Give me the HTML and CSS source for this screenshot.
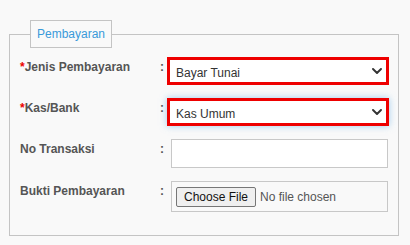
FILE: index.html
```html
<!DOCTYPE html>
<html lang="id">
<head>
<meta charset="utf-8">
<title>Pembayaran</title>
<link rel="stylesheet" href="styles.css">
</head>
<body>
<div class="page">
  <fieldset class="panel">
    <legend class="panel-title">Pembayaran</legend>
    <div class="form-grid">
      <div class="label"><span class="req">*</span>Jenis Pembayaran</div>
      <div class="colon">:</div>
      <div class="select invalid">
        <span class="select-text">Bayar Tunai</span>
        <svg class="chev" width="10" height="6" viewBox="0 0 10 6"><path d="M1 1 L5 5 L9 1" fill="none" stroke="#333" stroke-width="1.9" stroke-linecap="round" stroke-linejoin="round"/></svg>
      </div>

      <div class="label"><span class="req">*</span>Kas/Bank</div>
      <div class="colon">:</div>
      <div class="select invalid focused">
        <span class="select-text">Kas Umum</span>
        <svg class="chev" width="10" height="6" viewBox="0 0 10 6"><path d="M1 1 L5 5 L9 1" fill="none" stroke="#333" stroke-width="1.9" stroke-linecap="round" stroke-linejoin="round"/></svg>
      </div>

      <div class="label">No Transaksi</div>
      <div class="colon">:</div>
      <input class="text-input" type="text">

      <div class="label">Bukti Pembayaran</div>
      <div class="colon">:</div>
      <div class="file-box">
        <button class="file-btn" type="button">Choose File</button>
        <span class="file-name">No file chosen</span>
      </div>
    </div>
  </fieldset>
</div>
</body>
</html>
```
FILE: styles.css
```css
html, body {
  margin: 0;
  padding: 0;
  background: #f9f9f9;
}
body {
  font-family: "Liberation Sans", Arial, sans-serif;
  font-size: 12px;
  line-height: 14px;
}
.page {
  padding: 20px 0 0 9px;
}
.panel {
  box-sizing: border-box;
  width: 390px;
  margin: 0;
  padding: 9px 10px 23px 10px;
  border: 1px solid #c4c4c4;
  min-inline-size: 0;
}
.panel-title {
  margin-left: 10px;
  padding: 6px 6px;
  border: 1px solid #c4c4c4;
  color: #3a9ad9;
  font-size: 12px;
  line-height: 14px;
}
.form-grid {
  display: grid;
  grid-template-columns: 140px 11px 217px;
  grid-template-rows: 28px 28px 29px 31px;
  row-gap: 13px;
}
.label {
  padding-top: 3px;
  font-weight: bold;
  color: #555;
}
.req {
  color: #e00;
}
.colon {
  padding-top: 3px;
  font-weight: bold;
  color: #555;
}
.select {
  box-sizing: border-box;
  display: flex;
  align-items: center;
  justify-content: space-between;
  height: 28px;
  margin-left: -4px;
  width: calc(100% + 5px);
  padding: 0 4px 0 6px;
  background: #fff;
  border: 3px solid #ee0000;
  color: #333;
}
.select-text {
  padding-top: 3px;
}
.focused {
  box-shadow: 0 0 7px rgba(102, 175, 233, 0.6);
}
.chev {
  display: block;
}
.text-input {
  box-sizing: border-box;
  height: 29px;
  width: 100%;
  margin: 0;
  border: 1px solid #c8c8c8;
  background: #fff;
  padding: 0 6px;
  font: inherit;
}
.file-box {
  box-sizing: border-box;
  height: 31px;
  display: flex;
  align-items: center;
  gap: 4px;
  padding: 0 4px;
  border: 1px solid #c8c8c8;
}
.file-btn {
  box-sizing: border-box;
  height: 20px;
  width: 80px;
  margin: 0;
  padding: 0;
  border: 1px solid #767676;
  border-radius: 2px;
  background: #efefef;
  color: #111;
  font-family: "Liberation Sans", Arial, sans-serif;
  font-size: 12px;
  line-height: 14px;
}
.file-name {
  color: #555;
}
```
